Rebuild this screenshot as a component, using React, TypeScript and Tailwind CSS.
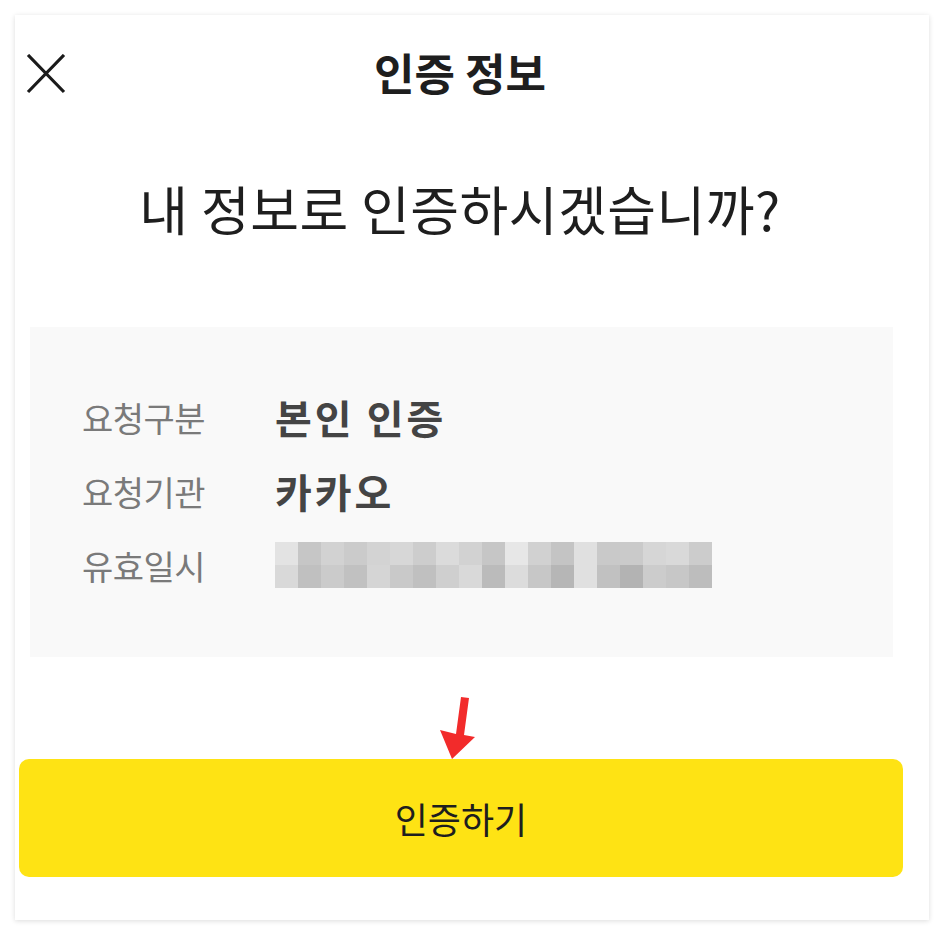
import React from "react";

const row1 = ["#e3e3e3","#c6c6c6","#d2d2d2","#cbcbcb","#d3d3d3","#d7d7d7","#cdcdcd","#dbdbdb","#d2d2d2","#c6c6c6","#e7e7e7","#d1d1d1","#c4c4c4","#e0e0e0","#c9c9c9","#cacaca","#d6d6d6","#d9d9d9","#cccccc"];
const row2 = ["#d9d9d9","#c0c0c0","#cbcbcb","#c1c1c1","#d5d5d5","#c9c9c9","#c0c0c0","#cfcfcf","#d9d9d9","#bbbbbb","#dcdcdc","#c7c7c7","#b6b6b6","#e0e0e0","#c1c1c1","#b3b3b3","#cccccc","#c7c7c7","#bdbdbd"];

export default function App() {
  const font = { fontFamily: '"Noto Sans CJK KR", "Noto Sans", sans-serif' };
  return (
    <div className="w-[944px] h-[936px] bg-white p-[15px]" style={font}>
      <div className="w-[914px] h-[905px] bg-white shadow-[0_1px_5px_rgba(0,0,0,0.14)]">
        <div className="w-[890px] flex flex-col">
          {/* header */}
          <div className="h-[116px] grid grid-cols-[1fr_auto_1fr] items-center">
            <div className="pl-[11px] pt-[2px]">
              <svg width="40" height="40" viewBox="0 0 40 40">
                <path d="M2 1 L38 38 M38 1 L2 38" stroke="#1a1a1a" strokeWidth="3.2" fill="none" />
              </svg>
            </div>
            <div className="text-[44px] font-bold tracking-[0px] text-[#1e1e1e] leading-none -mt-[3px]">인증 정보</div>
            <div />
          </div>
          {/* question */}
          <div className="mt-[50px] h-[54px] flex items-center justify-center text-[53px] tracking-[0.5px] text-[#1e1e1e] leading-none">
            내 정보로 인증하시겠습니까?
          </div>
          {/* info box */}
          <div className="mt-[92px] ml-[15px] w-[863px] h-[330px] bg-[#f9f9f9] pt-[53px] pl-[52px]">
            <div className="h-[74px] flex items-center">
              <div className="w-[193px] text-[34px] tracking-[-0.5px] text-[#7a7a7a]">요청구분</div>
              <div className="text-[40px] font-bold tracking-[3px] text-[#444]">본인 인증</div>
            </div>
            <div className="h-[74px] flex items-center">
              <div className="w-[193px] text-[34px] tracking-[-0.5px] text-[#7a7a7a]">요청기관</div>
              <div className="text-[40px] font-bold tracking-[3px] text-[#444]">카카오</div>
            </div>
            <div className="h-[74px] flex items-center">
              <div className="w-[193px] text-[34px] tracking-[-0.5px] text-[#7a7a7a]">유효일시</div>
              <div className="flex flex-col">
                <div className="flex">
                  {row1.map((c, i) => (
                    <div key={i} className="w-[23px] h-[23px]" style={{ background: c }} />
                  ))}
                </div>
                <div className="flex">
                  {row2.map((c, i) => (
                    <div key={i} className="w-[23px] h-[23px]" style={{ background: c }} />
                  ))}
                </div>
              </div>
            </div>
          </div>
          {/* button */}
          <div className="relative mt-[102px] ml-[4px] w-[884px]">
            <svg className="absolute left-[417px] top-[-65px]" width="44" height="66" viewBox="0 0 44 66">
              <path d="M25 3 L33 4 L28 41 L39 43 L16 65 L4 36 L20 40 Z" fill="#f22b2b" />
            </svg>
            <button className="w-[884px] h-[118px] rounded-[10px] bg-[#fee314] flex items-center justify-center text-[36px] tracking-[0px] text-[#1e1e1e]">
              인증하기
            </button>
          </div>
        </div>
      </div>
    </div>
  );
}
